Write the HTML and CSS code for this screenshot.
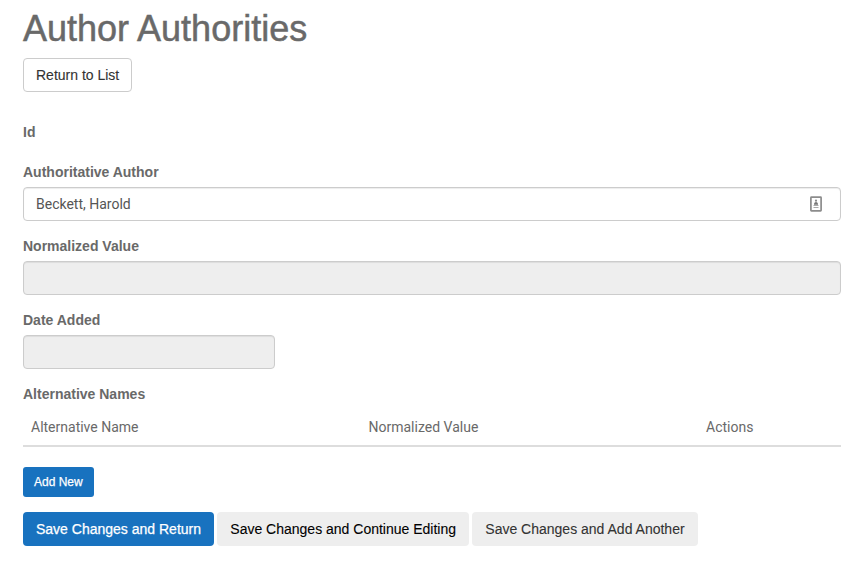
FILE: index.html
```html
<!DOCTYPE html>
<html lang="en">
<head>
<meta charset="utf-8">
<title>Author Authorities</title>
<link rel="stylesheet" href="styles.css">
</head>
<body>
<main>
<h1>Author Authorities</h1>
<a class="btn btn-default">Return to List</a>
<form>
<div class="group"><label>Id</label></div>
<div class="group"><label>Authoritative Author</label>
<div class="control"><span>Beckett, Harold</span>
<svg width="12" height="16" viewBox="0 0 12 16"><rect x=".9" y="1.2" width="10.2" height="13.6" rx=".5" fill="#fff" stroke="#8c8c8c" stroke-width="1.7"/><circle cx="6" cy="4.7" r="1.1" fill="#888"/><path d="M4 8.7V7.6Q4.5 6 6 6T8 7.6V8.7Z" fill="#777"/><path d="M3.5 9h5v1h-5zM3.5 11h5v1h-5z" fill="#aaa"/></svg></div></div>
<div class="group"><label>Normalized Value</label><div class="control disabled"></div></div>
<div class="group"><label>Date Added</label><div class="control disabled date"></div></div>
<label>Alternative Names</label>
<table><thead><tr><th class="name">Alternative Name</th><th class="name">Normalized Value</th><th>Actions</th></tr></thead></table>
<a class="btn btn-primary btn-sm">Add New</a>
<div class="actions">
<a class="btn btn-primary">Save Changes and Return</a>
<a class="btn btn-grey dark">Save Changes and Continue Editing</a>
<a class="btn btn-grey">Save Changes and Add Another</a>
</div>
</form>
</main>
</body>
</html>
```
FILE: styles.css
```css
* { box-sizing: border-box; }
body { margin: 0; background: #fff; color: #696969; font: 14px/20px "Liberation Sans", Arial, sans-serif; }
main { padding: 9px 22px 0 23px; }
h1 { margin: 0 0 9px; font-size: 36px; line-height: 40px; font-weight: 400; -webkit-text-stroke: .5px #696969; }
.btn { display: inline-block; height: 34px; padding: 6px 12px; border: 1px solid transparent; border-radius: 4px; white-space: nowrap; -webkit-text-stroke: .1px; }
.btn-default { border-color: #ccc; color: #333; }
.btn-primary { background: #1872bf; color: #fff; -webkit-text-stroke: .25px; }
.btn-grey { background: #eee; color: #333; }
.btn-grey.dark { color: #000; }
.btn-sm { align-self: flex-start; height: 30px; padding: 5px 10px; font-size: 12px; line-height: 18px; border-radius: 3px; }
form { display: flex; flex-direction: column; padding-top: 30px; }
label { display: block; margin-bottom: 5px; font-weight: 700; }
.group { margin-bottom: 15px; }
.control { display: flex; align-items: center; justify-content: space-between; height: 34px; padding: 0 18px 0 12px; border: 1px solid #ccc; border-radius: 4px; color: #555; font-family: Roboto, sans-serif; box-shadow: inset 0 1px 1px rgba(0,0,0,.075); }
.disabled { background: #eee; }
.date { width: 252px; }
table { width: 100%; table-layout: fixed; border-collapse: collapse; margin-bottom: 20px; font-family: Roboto, sans-serif; }
th { padding: 8px; text-align: left; font-weight: 400; border-bottom: 2px solid #ddd; }
.name { width: 337.5px; }
.actions { display: flex; gap: 3.3px; margin-top: 15px; }
```
